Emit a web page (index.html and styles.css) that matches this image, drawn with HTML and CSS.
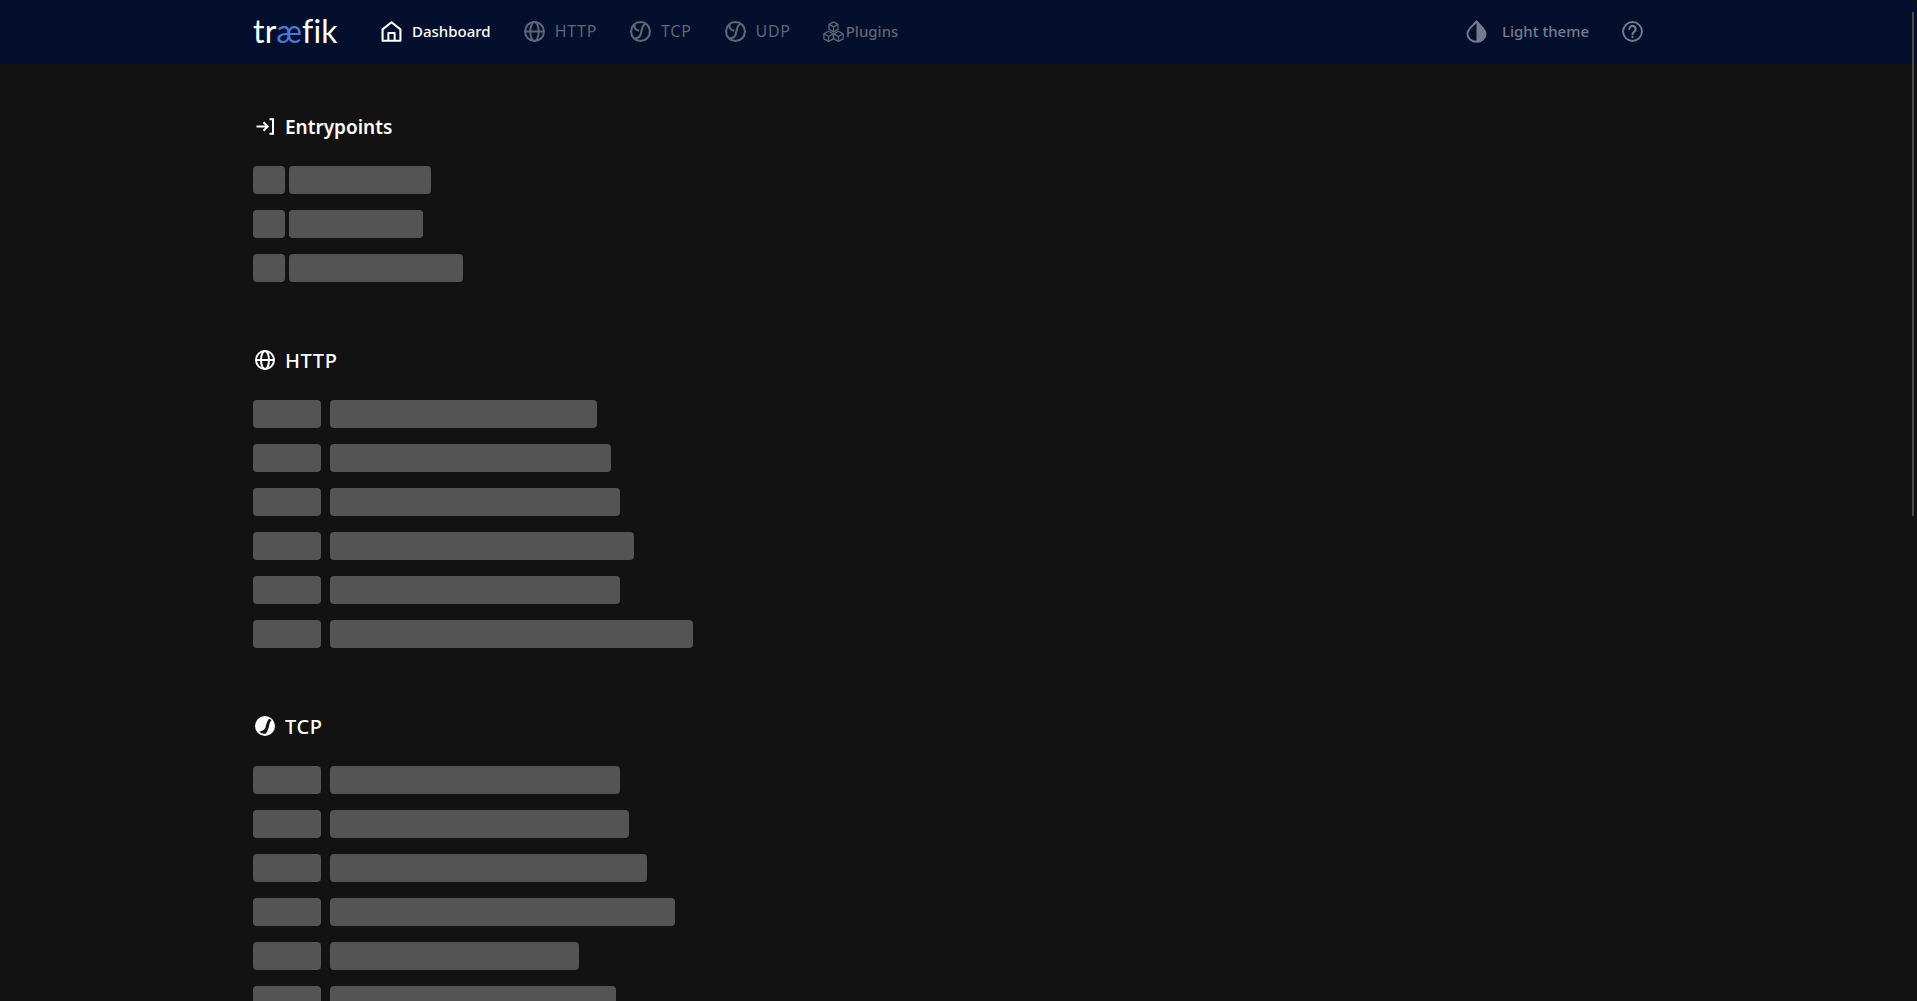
FILE: index.html
```html
<!DOCTYPE html>
<html lang="en">
<head>
<meta charset="utf-8">
<title>Traefik</title>
<link rel="stylesheet" href="styles.css">
</head>
<body>
<header class="navbar">
  <div class="logo">tr<span class="logo-ae">æ</span>fik</div>
  <nav class="nav">
    <a class="nav-item active home">
      <svg class="ic" viewBox="0 0 20 20" fill="none" stroke="currentColor" stroke-width="2" stroke-linejoin="round"><path d="M1.500 18.800V8L10 1.200 18.500 8v10.800z"/><path d="M7 18.800v-7.300h6v7.300" stroke-width="1.900"/></svg>
      <span>Dashboard</span>
    </a>
    <a class="nav-item caps http">
      <svg class="ic" viewBox="0 0 20 20" fill="none" stroke="currentColor" stroke-width="1.900"><circle cx="10" cy="10" r="9"/><ellipse cx="10" cy="10" rx="4" ry="9"/><path d="M1 10h18"/></svg>
      <span>HTTP</span>
    </a>
    <a class="nav-item caps tcp">
      <svg class="ic" viewBox="0 0 20 20" fill="none" stroke="currentColor" stroke-width="2"><circle cx="10" cy="10" r="9"/><path d="M15 2.300c-2.500 1.400-3.300 3.700-3.800 6.200-.5 2.600-.8 5-2.300 6.500-1.100 1.200-2.800 1.700-4.900 1.700"/><path d="M4.300 3.500C3.700 6 5 8.800 8.800 9.200"/></svg>
      <span>TCP</span>
    </a>
    <a class="nav-item caps udp">
      <svg class="ic" viewBox="0 0 20 20" fill="none" stroke="currentColor" stroke-width="2"><circle cx="10" cy="10" r="9"/><path d="M15 2.300c-2.500 1.400-3.300 3.700-3.800 6.200-.5 2.600-.8 5-2.300 6.500-1.100 1.200-2.800 1.700-4.900 1.700"/><path d="M4.300 3.500C3.700 6 5 8.800 8.800 9.200"/></svg>
      <span>UDP</span>
    </a>
    <a class="nav-item plugins">
      <svg class="ic" viewBox="0 0 20 20" fill="none" stroke="currentColor" stroke-width="1.200" stroke-linejoin="round"><path d="M10 .8 14.300 3.200V8L10 10.400 5.700 8V3.200z"/><path d="M5.700 3.200 10 5.600 14.300 3.200M10 5.600v4.800"/><path d="M5.300 9.800 9.800 12.300V17L5.300 19.400.8 17V12.300z"/><path d="M.8 12.300l4.500 2.400 4.500-2.400M5.300 14.700v4.700"/><path d="M14.700 9.800 19.200 12.300V17l-4.500 2.400L10.200 17V12.300z"/><path d="M10.200 12.300l4.500 2.400 4.500-2.400M14.700 14.700v4.700"/></svg>
      <span>Plugins</span>
    </a>
  </nav>
  <div class="nav-right">
    <a class="nav-item theme">
      <svg class="ic drop" viewBox="0 0 20 22"><path d="M10 1.300C7 5.200 1.300 8.700 1.300 13.200a8.700 7.700 0 0 0 17.400 0C18.700 8.700 13 5.200 10 1.300z" fill="none" stroke="currentColor" stroke-width="1.900" stroke-linejoin="round"/><path d="M10 1.300c3 3.900 8.700 7.400 8.700 11.900a8.700 7.700 0 0 1-8.700 7.700z" fill="#757b8b"/></svg>
      <span>Light theme</span>
    </a>
    <a class="nav-item help">
      <svg class="ic" viewBox="0 0 20 20" fill="none" stroke="currentColor" stroke-width="1.800" stroke-linecap="round"><circle cx="10" cy="10" r="9"/><path d="M7 7.600a3 3 0 1 1 4.700 2.500c-1 .7-1.700 1.200-1.700 2.400" stroke-width="2"/><path d="M10 15.200v.1" stroke-width="2.200"/></svg>
    </a>
  </div>
</header>

<main class="main">
  <section class="section">
    <h2 class="title">
      <svg class="title-ic" viewBox="0 0 20 20" fill="none" stroke="currentColor" stroke-width="2"><path d="M1.500 10.500h11M8.500 6.300l4.200 4.200-4.200 4.200M14.500 3.200h3.500v14.600h-3.500"/></svg>
      <span>Entrypoints</span>
    </h2>
    <div class="rows">
      <div class="row tight"><i class="bar short"></i><i class="bar" style="width:142px"></i></div>
      <div class="row tight"><i class="bar short"></i><i class="bar" style="width:134px"></i></div>
      <div class="row tight"><i class="bar short"></i><i class="bar" style="width:174px"></i></div>
    </div>
  </section>

  <section class="section">
    <h2 class="title caps-title">
      <svg class="title-ic" viewBox="0 0 20 20" fill="none" stroke="currentColor" stroke-width="2"><circle cx="10" cy="10" r="9"/><ellipse cx="10" cy="10" rx="4" ry="9"/><path d="M1 10h18"/></svg>
      <span>HTTP</span>
    </h2>
    <div class="rows">
      <div class="row"><i class="bar medium"></i><i class="bar" style="width:267px"></i></div>
      <div class="row"><i class="bar medium"></i><i class="bar" style="width:281px"></i></div>
      <div class="row"><i class="bar medium"></i><i class="bar" style="width:290px"></i></div>
      <div class="row"><i class="bar medium"></i><i class="bar" style="width:304px"></i></div>
      <div class="row"><i class="bar medium"></i><i class="bar" style="width:290px"></i></div>
      <div class="row"><i class="bar medium"></i><i class="bar" style="width:363px"></i></div>
    </div>
  </section>

  <section class="section">
    <h2 class="title caps-title">
      <svg class="title-ic" viewBox="0 0 20 20"><circle cx="10" cy="10" r="10" fill="currentColor"/><path d="M14 2.800C12 5 11 9 10.500 11.500 10 13 8 15 4.200 15.800 6 17.500 9 18.200 11 17.500 13 15 13.500 12 14 10c.5-3 1.500-5 2.600-6z" fill="#121212"/></svg>
      <span>TCP</span>
    </h2>
    <div class="rows">
      <div class="row"><i class="bar medium"></i><i class="bar" style="width:290px"></i></div>
      <div class="row"><i class="bar medium"></i><i class="bar" style="width:299px"></i></div>
      <div class="row"><i class="bar medium"></i><i class="bar" style="width:317px"></i></div>
      <div class="row"><i class="bar medium"></i><i class="bar" style="width:345px"></i></div>
      <div class="row"><i class="bar medium"></i><i class="bar" style="width:249px"></i></div>
      <div class="row"><i class="bar medium"></i><i class="bar" style="width:286px"></i></div>
    </div>
  </section>
</main>
<div class="scroll-thumb"></div>
</body>
</html>
```
FILE: styles.css
```css
* { box-sizing: border-box; }
html, body { height: 100%; }
body {
  margin: 0;
  overflow: hidden;
  background: #121212;
  color: #fff;
  font-family: "Noto Sans", "Lato", sans-serif;
  position: relative;
}
.navbar {
  height: 64px;
  background: #030f2c;
  display: flex;
  align-items: center;
  padding: 0 274px 2px 253px;
  border-top-right-radius: 8px;
}
.logo {
  width: 128px;
  font-family: "Lato", sans-serif;
  font-size: 32px;
  line-height: 62px;
  font-weight: 400;
  letter-spacing: 0.2px;
  color: #fff;
}
.logo-ae { color: #4b76d9; }
.nav { display: flex; align-items: center; }
.nav-right { margin-left: auto; display: flex; align-items: center; }
.nav-item {
  display: flex;
  align-items: center;
  gap: 10px;
  font-size: 15px;
  line-height: 20px;
  font-weight: 500;
  color: #5f6675;
}
.nav-item.caps { font-size: 16px; letter-spacing: 0.7px; font-weight: 400; }
.nav-item.active { color: #fff; }
.ic { width: 21px; height: 21px; flex: none; }
.drop { height: 23px; }
.home { margin-right: 33px; }
.http { margin-right: 33px; }
.tcp { margin-right: 33px; }
.udp { margin-right: 32px; }
.plugins { gap: 2px; }
.theme { gap: 15px; margin-right: 33px; color: #757b8b; }
.help { color: #757b8b; }
.main {
  padding: 51px 0 0 253px;
  display: flex;
  flex-direction: column;
  gap: 67px;
}
.title {
  margin: 0 0 27px;
  height: 24px;
  display: flex;
  align-items: center;
  gap: 10px;
  font-size: 19px;
  line-height: 24px;
  font-weight: 600;
}
.title.caps-title { font-size: 20px; letter-spacing: 0.6px; font-weight: 500; }
.title-ic { width: 20px; height: 20px; flex: none; margin: -2px 0 0 2px; }
.rows { display: flex; flex-direction: column; gap: 16px; }
.row { display: flex; gap: 9px; }
.row.tight { gap: 4px; }
.bar {
  display: block;
  height: 28px;
  background: #545454;
  border-radius: 4px;
}
.bar.short { width: 32px; }
.bar.medium { width: 68px; }
.scroll-thumb {
  position: absolute;
  top: 12px;
  right: 3px;
  width: 2px;
  height: 504px;
  background: #4a4a4a;
}
```
